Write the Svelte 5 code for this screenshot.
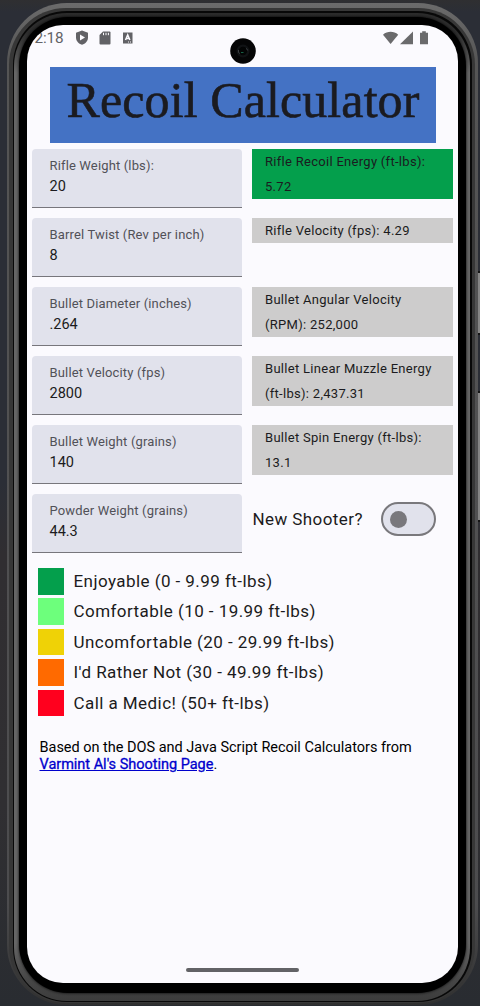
<script>
  const rows = [
    { label: 'Rifle Weight (lbs):', value: '20', result: ['Rifle Recoil Energy (ft-lbs):', '5.72'], good: true },
    { label: 'Barrel Twist (Rev per inch)', value: '8', result: ['Rifle Velocity (fps): 4.29'] },
    { label: 'Bullet Diameter (inches)', value: '.264', result: ['Bullet Angular Velocity', '(RPM): 252,000'] },
    { label: 'Bullet Velocity (fps)', value: '2800', result: ['Bullet Linear Muzzle Energy', '(ft-lbs): 2,437.31'] },
    { label: 'Bullet Weight (grains)', value: '140', result: ['Bullet Spin Energy (ft-lbs):', '13.1'] },
    { label: 'Powder Weight (grains)', value: '44.3' }
  ];
  const legend = [
    ['#049f4c', 'Enjoyable (0 - 9.99 ft-lbs)'],
    ['#6dff7c', 'Comfortable (10 - 19.99 ft-lbs)'],
    ['#efd206', 'Uncomfortable (20 - 29.99 ft-lbs)'],
    ['#ff6a00', "I'd Rather Not (30 - 49.99 ft-lbs)"],
    ['#ff001e', 'Call a Medic! (50+ ft-lbs)']
  ];
</script>

<div class="desk">
  <i class="key power"></i>
  <i class="key volume"></i>
  <div class="shell"><div class="rim"><div class="groove"><div class="metal"><div class="bezel">
    <div class="screen">
      <header class="status">
        <span class="time">2:18</span>
        <svg class="shield" width="14" height="16" viewBox="0 0 14 16"><path fill="#626266" d="M7 .5 13 2.8v4.7c0 3.4-2.500 6.200-6 7.300C3.500 13.700 1 10.900 1 7.500V2.800z"/><path fill="#fbfafe" d="M5 4.400v6L10 7.400z"/></svg>
        <svg class="sd" width="12" height="14" viewBox="0 0 12 14"><path fill="#626266" d="M4 .5h6.500a1 1 0 0 1 1 1v11a1 1 0 0 1-1 1h-9a1 1 0 0 1-1-1V4z"/><path stroke="#fbfafe" stroke-width="1" d="M4.500 1.800v2.400M7 1.800v2.400M9.400 1.800v2.400"/></svg>
        <svg class="auto" width="10" height="12" viewBox="0 0 10 12"><path fill="#626266" d="M0 .5h9.500v11H0z"/><path fill="none" stroke="#fbfafe" stroke-width="1.500" d="M2.500 8 4.700 2.900 6.900 8M3.200 6.500h3"/><path fill="#fbfafe" d="M5 9.500h1v.9H5zM7 9.500h1v.9H7z"/></svg>
        <svg class="signals" width="46" height="14" viewBox="0 0 46 14"><g fill="#6a6a6c"><path d="M0 3.700C4.500-.1 10.700-.1 15.200 3.700L7.600 13z"/><path d="M17 13.300 30 .5v12.800z"/><path d="M39.200.3h3.600v1.400H45v11.600h-8V1.700h2.200z"/></g></svg>
        <svg class="camera" width="26" height="26" viewBox="0 0 26 26"><circle cx="13" cy="13" r="12.800" fill="#050506"/><circle cx="13" cy="13" r="6.500" fill="#101214"/><circle cx="13" cy="13" r="4.200" fill="#030404"/><path fill="none" stroke="#3c4044" d="M8.500 12v2.500l1.500 1M16 10.500q1.500.5 1.700 2"/><path fill="none" stroke="#176046" d="M11 14.500h2.500"/></svg>
      </header>
      <h1><span>Recoil Calculator</span></h1>
      <main>
        {#each rows as row}
          <div class="row">
            <div class="field"><span class="label">{row.label}</span><span class="value">{row.value}</span></div>
            {#if row.result}
              <div class="result" class:good={row.good}>
                {#each row.result as line}<div>{line}</div>{/each}
              </div>
            {:else}
              <div class="shooter"><span>New Shooter?</span><span class="switch"><i></i></span></div>
            {/if}
          </div>
        {/each}
      </main>
      <ul>
        {#each legend as [color, text]}
          <li><i style:background={color}></i><span>{text}</span></li>
        {/each}
      </ul>
      <p>Based on the DOS and Java Script Recoil Calculators from<br /><a href="#source">Varmint Al's Shooting Page</a>.</p>
      <div class="home"></div>
    </div>
  </div></div></div></div></div>
</div>

<style>
  :global(body) { margin: 0; }
  * { box-sizing: border-box; }
  .desk { position: relative; width: 480px; height: 1006px; overflow: hidden; padding: 3px 2px 1px 7px; background: linear-gradient(#2f2f31, #2b2e36 12px, #2b2e36 48%, #302e31 55%, #302f32 80%, #292c31); font-family: Roboto, sans-serif; }
  .key { position: absolute; left: 477px; width: 3px; background: #858585; border: solid #151515; border-width: 2px 0; }
  .power { top: 271px; height: 64px; }
  .volume { top: 391px; height: 131px; }
  .shell { position: relative; height: 1002px; padding: 5px 3px 2px 2px; border-radius: 60px; background: linear-gradient(#6b6b6b, #555 60px, #4c4c4e 900px, #303030); }
  .rim { height: 100%; padding: 3px 3px 1px 4px; border-radius: 57px; background: #373737; }
  .groove { height: 100%; padding: 2px 2px 1px 1px; border-radius: 54px; background: #080808; }
  .metal { height: 100%; padding: 4px 4px 8px 5px; border-radius: 53px; background: linear-gradient(#2b2b2b, #2d2d2d 20px, #666 60px, #666 930px, #484848 965px, #3c3c3c); }
  .bezel { height: 100%; padding: 8px 8px 10px; border-radius: 49px; background: #000; box-shadow: 0 0 3px #000; }
  .screen { position: relative; display: flex; flex-direction: column; height: 100%; border-radius: 36px; overflow: hidden; background: #fbfafe; color: #1b1b20; }
  .status { display: flex; align-items: center; height: 25px; padding-left: 7.5px; flex: none; }
  .time { width: 40px; font-size: 15.3px; letter-spacing: -.1px; color: #626266; white-space: nowrap; }
  .sd { margin-left: 10px; }
  .auto { margin-left: 12px; }
  .signals { margin: 0 29px 0 auto; }
  .camera { position: absolute; left: 203px; top: 13px; }
  h1 { flex: none; display: flex; justify-content: center; align-items: center; width: 386px; height: 76px; margin: 17px 0 0 23px; background: #4472c4; font: 400 50px/67px "Liberation Serif", serif; letter-spacing: .1px; white-space: nowrap; -webkit-text-stroke: .6px #1b1b20; padding-bottom: 9px; }
  main { margin: 6px 5px 0; flex: none; }
  .row { display: grid; grid-template-columns: 210px 201px; column-gap: 10px; align-items: start; height: 69px; }
  .field { display: flex; flex-direction: column; height: 59px; padding: 8px 17.500px 0; border-bottom: 1.500px solid #77767c; border-radius: 4px 4px 0 0; background: #e1e2ec; }
  .label { font-size: 13px; line-height: 17px; letter-spacing: .15px; color: #515158; white-space: nowrap; }
  .value { margin-top: 4px; font-size: 14.500px; line-height: 18px; }
  .result { padding-left: 13px; background: #cdcccc; font-size: 13px; line-height: 25px; letter-spacing: .29px; white-space: nowrap; }
  .good { background: #049f4c; }
  .shooter { display: flex; align-items: center; justify-content: space-between; width: 184px; height: 50px; padding-left: .5px; font-size: 17px; letter-spacing: .42px; }
  .switch { width: 55px; height: 34px; padding: 6.500px; border: 2px solid #79787c; border-radius: 17px; background: #e1e2ec; }
  .switch i { display: block; width: 17px; height: 17px; border-radius: 50%; background: #79787c; }
  ul { list-style: none; margin: 5px 0 0 10.500px; padding: 0; flex: none; }
  li { display: flex; align-items: flex-start; height: 30.400px; font-size: 17px; line-height: 27.500px; letter-spacing: .44px; white-space: nowrap; }
  li i { width: 26.500px; height: 26.500px; margin-right: 9.500px; }
  p { margin: 19px 0 0 12.500px; color: #000; font-size: 14.500px; letter-spacing: -.015px; line-height: 17.500px; white-space: nowrap; }
  a { color: #00c; -webkit-text-stroke: .3px #00c; }
  .home { width: 113px; height: 4px; margin: auto 0 11px 159px; border-radius: 2px; background: #626266; }
</style>
